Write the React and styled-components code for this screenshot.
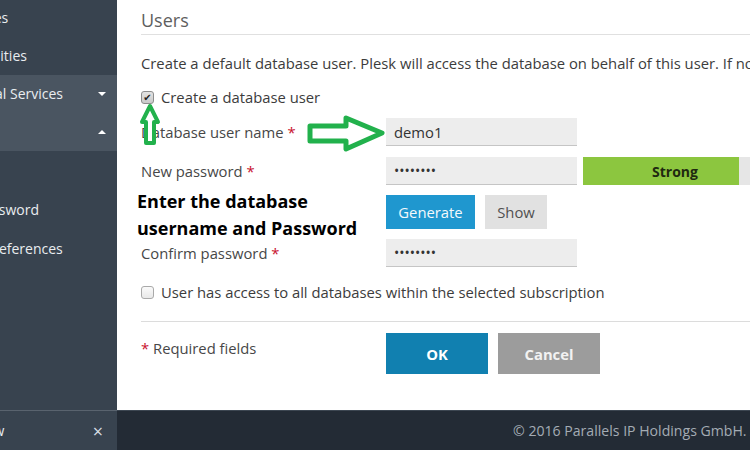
import React from "react";
import styled, { createGlobalStyle } from "styled-components";

const GlobalStyle = createGlobalStyle`
  html, body {
    margin: 0;
    padding: 0;
    overflow: hidden;
    background: #ffffff;
  }
  body {
    font-family: "Open Sans", "DejaVu Sans", sans-serif;
    font-size: 14px;
  }
`;

const Page = styled.div`
  display: flex;
  width: 750px;
  height: 450px;
  overflow: hidden;
`;

/* ---------- sidebar ---------- */

const Sidebar = styled.aside`
  width: 117px;
  flex-shrink: 0;
  display: flex;
  flex-direction: column;
  justify-content: space-between;
  background: #38434f;
  color: #e9edf0;
  overflow: hidden;
`;

const NavList = styled.nav`
  margin-top: -1px;
`;

const NavGroup = styled.div`
  background: ${(p) => (p.$active ? "#4a5561" : "transparent")};
`;

const NavItem = styled.div`
  height: ${(p) => (p.$sub ? 39 : 38)}px;
  display: flex;
  align-items: center;
  white-space: nowrap;
`;

const NavText = styled.span`
  flex: 1;
  margin-left: ${(p) => (p.$sub ? -77 : -60)}px;
  line-height: 20px;
`;

const Caret = styled.span`
  width: 0;
  height: 0;
  margin-right: 11px;
  border-left: 4px solid transparent;
  border-right: 4px solid transparent;
  ${(p) =>
    p.$up
      ? "border-bottom: 4px solid #ffffff;"
      : "border-top: 4px solid #ffffff;"}
`;

const SidebarBottom = styled.div`
  height: 39px;
  border-top: 1px solid #59636e;
  display: flex;
  align-items: center;
  white-space: nowrap;
`;

const BottomText = styled.span`
  flex: 1;
  margin-left: -79px;
`;

const CloseMark = styled.span`
  margin-right: 14px;
  font-size: 18px;
  color: #d6dde3;
`;

/* ---------- main ---------- */

const Main = styled.div`
  flex: 1;
  display: flex;
  flex-direction: column;
  position: relative;
  min-width: 0;
`;

const Content = styled.div`
  flex: 1;
  padding: 8px 0 0 24px;
  background: #ffffff;
  color: #3b3b3b;
  font-size: 14.8px;
  overflow: hidden;
  white-space: nowrap;
`;

const Title = styled.h2`
  margin: 0;
  font-size: 18px;
  font-weight: 400;
  line-height: 24px;
  color: #5e5e5e;
  padding-bottom: 2px;
  border-bottom: 1px solid #e0e0e0;
`;

const Description = styled.p`
  margin: 18px 0 0;
  line-height: 20px;
  color: #3c3c3c;
`;

const CheckRow = styled.label`
  display: flex;
  align-items: center;
  gap: 7px;
  line-height: 20px;
  margin-top: ${(p) => p.$top}px;
  color: #3c3c3c;
`;

const Box = styled.span`
  width: 11px;
  height: 11px;
  border: 1px solid ${(p) => (p.$checked ? "#8d8d8d" : "#a9a9a9")};
  border-radius: 3px;
  background: ${(p) =>
    p.$checked
      ? "linear-gradient(#e4e4e4, #c9c9c9)"
      : "linear-gradient(#fafafa, #e8e8e8)"};
  display: flex;
  align-items: center;
  justify-content: center;
  font-size: 10px;
  line-height: 1;
  color: #222;
`;

const FormRow = styled.div`
  display: flex;
  align-items: center;
  margin-top: ${(p) => p.$top}px;
`;

const Label = styled.div`
  width: 245px;
  flex-shrink: 0;
  color: #474747;
  line-height: 20px;
  align-self: ${(p) => (p.$top ? "flex-start" : "center")};
  padding-top: ${(p) => (p.$top ? 5 : 0)}px;
`;

const Star = styled.span`
  color: #c8102e;
`;

const Input = styled.div`
  width: 183px;
  height: 27px;
  flex-shrink: 0;
  padding-left: 8px;
  background: #ededed;
  border-bottom: 1px solid #c5c5c5;
  display: flex;
  align-items: center;
  color: #333;
  font-size: ${(p) => (p.$dots ? "14px" : "14.8px")};
`;

const Meter = styled.div`
  position: relative;
  width: 184px;
  height: 28px;
  flex-shrink: 0;
  margin-left: 6px;
  background: #e6e6e6;
  display: flex;
  align-items: center;
  justify-content: center;
`;

const MeterFill = styled.div`
  position: absolute;
  left: 0;
  top: 0;
  bottom: 0;
  background: #8cc63f;
`;

const MeterText = styled.span`
  position: relative;
  font-size: 14px;
  font-weight: 700;
  color: #1f2a10;
`;

const Buttons = styled.div`
  display: flex;
  gap: 10px;
`;

const Button = styled.button`
  font-family: inherit;
  font-size: 14.8px;
  font-weight: ${(p) => (p.$bold ? 700 : 400)};
  border: none;
  padding: 0;
  flex-shrink: 0;
  width: ${(p) => p.$w}px;
  height: ${(p) => p.$h}px;
  background: ${(p) => p.$bg};
  color: ${(p) => p.$fg};
`;

const Separator = styled.hr`
  margin: 19px 0 0;
  border: none;
  border-top: 1px solid #dcdcdc;
  height: 0;
`;

const Footer = styled.footer`
  height: 39px;
  border-top: 1px solid #3c4651;
  background: #232b35;
  color: #a4acb4;
  font-size: 14.1px;
  display: flex;
  align-items: center;
  padding-left: 396px;
  white-space: nowrap;
  overflow: hidden;
`;

/* ---------- annotations lying over the form ---------- */

const Note = styled.div`
  position: absolute;
  left: 20px;
  top: 188px;
  font-size: 18px;
  font-weight: 700;
  line-height: 27px;
  color: #000;
  white-space: nowrap;
`;

const ArrowSvg = styled.svg`
  position: absolute;
  left: ${(p) => p.$x}px;
  top: ${(p) => p.$y}px;
  overflow: visible;
`;

const green = "#22b14c";

const UpArrow = () => (
  <ArrowSvg $x={23} $y={103} width="20" height="44" viewBox="0 0 20 44">
    <path
      d="M10 3 L18 19 L14 19 L14 40 L6 40 L6 19 L2 19 Z"
      fill="#fff"
      stroke={green}
      strokeWidth="4"
      strokeLinejoin="round"
    />
  </ArrowSvg>
);

const RightArrow = () => (
  <ArrowSvg $x={189} $y={115} width="80" height="38" viewBox="0 0 80 38">
    <path
      d="M4 11 L40 11 L40 3 L76 18 L40 34 L40 26 L4 26 Z"
      fill="#fff"
      stroke={green}
      strokeWidth="5"
      strokeLinejoin="round"
    />
  </ArrowSvg>
);

export default function App() {
  return (
    <>
      <GlobalStyle />
      <Page>
        <Sidebar>
          <NavList>
            <NavItem>
              <NavText>Databases</NavText>
            </NavItem>
            <NavItem>
              <NavText>Communities</NavText>
            </NavItem>
            <NavGroup $active>
              <NavItem>
                <NavText>Additional Services</NavText>
                <Caret />
              </NavItem>
              <NavItem>
                <NavText>Account</NavText>
                <Caret $up />
              </NavItem>
            </NavGroup>
            <NavItem $sub>
              <NavText $sub>My Profile</NavText>
            </NavItem>
            <NavItem $sub>
              <NavText $sub>Change Password</NavText>
            </NavItem>
            <NavItem $sub>
              <NavText $sub>Interface Preferences</NavText>
            </NavItem>
          </NavList>
          <SidebarBottom>
            <BottomText>Change View</BottomText>
            <CloseMark>×</CloseMark>
          </SidebarBottom>
        </Sidebar>

        <Main>
          <Content>
            <Title>Users</Title>
            <Description>
              Create a default database user. Plesk will access the database on
              behalf of this user. If not specified, the first user will be used.
            </Description>

            <CheckRow $top={14}>
              <Box $checked>✔</Box>
              Create a database user
            </CheckRow>

            <FormRow $top={11}>
              <Label>
                Database user name <Star>*</Star>
              </Label>
              <Input>demo1</Input>
            </FormRow>

            <FormRow $top={11}>
              <Label>
                New password <Star>*</Star>
              </Label>
              <Input $dots>••••••••</Input>
              <Meter>
                <MeterFill style={{ width: "85%" }} />
                <MeterText>Strong</MeterText>
              </Meter>
            </FormRow>

            <FormRow $top={10}>
              <Label />
              <Buttons>
                <Button $w={89} $h={34} $bg="#1f97cf" $fg="#f4f9fc">
                  Generate
                </Button>
                <Button $w={62} $h={34} $bg="#e1e1e1" $fg="#505050">
                  Show
                </Button>
              </Buttons>
            </FormRow>

            <FormRow $top={10}>
              <Label>
                Confirm password <Star>*</Star>
              </Label>
              <Input $dots>••••••••</Input>
            </FormRow>

            <CheckRow $top={15}>
              <Box />
              User has access to all databases within the selected subscription
            </CheckRow>

            <Separator />

            <FormRow $top={11}>
              <Label $top>
                <Star>*</Star> Required fields
              </Label>
              <Buttons>
                <Button $bold $w={102} $h={41} $bg="#1180b0" $fg="#ffffff">
                  OK
                </Button>
                <Button $bold $w={102} $h={41} $bg="#9c9c9c" $fg="#f2f2f2">
                  Cancel
                </Button>
              </Buttons>
            </FormRow>
          </Content>

          <Footer>© 2016 Parallels IP Holdings GmbH. All rights reserved.</Footer>

          <Note>
            Enter the database
            <br />
            username and Password
          </Note>
          <UpArrow />
          <RightArrow />
        </Main>
      </Page>
    </>
  );
}
